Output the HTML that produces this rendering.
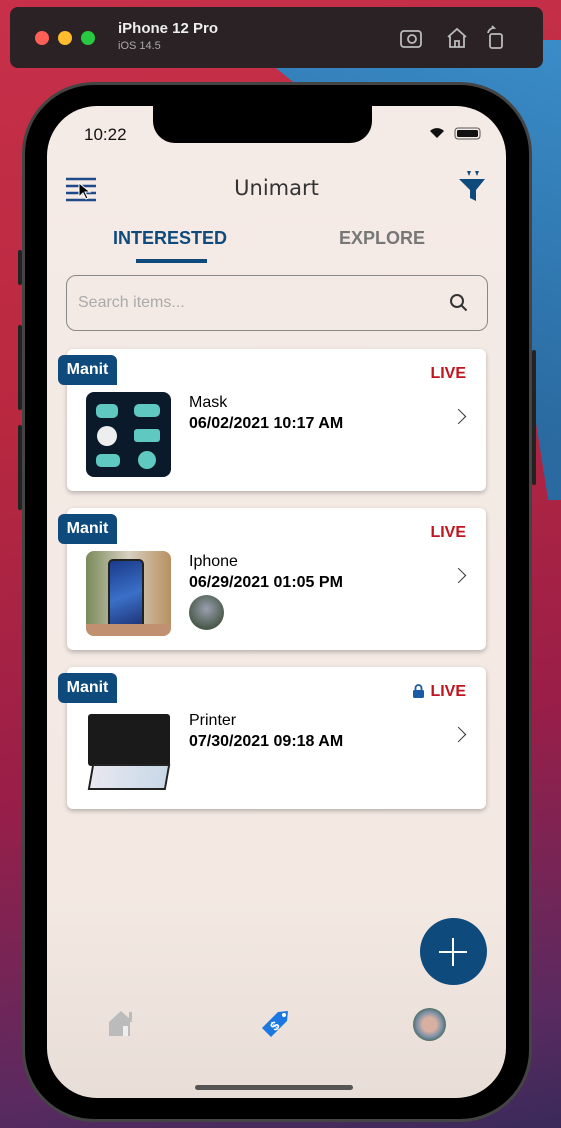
<!DOCTYPE html>
<html><head><meta charset="utf-8"><style>
*{margin:0;padding:0;box-sizing:border-box}
body{width:561px;height:1128px;overflow:hidden;position:relative;font-family:"Liberation Sans",sans-serif;
background:linear-gradient(170deg,#c8304a 0%,#b8283f 35%,#9a1e48 65%,#5a2a60 90%,#3a2a5a 100%)}
.bgblue{position:absolute;right:0;top:40px;width:320px;height:460px;background:linear-gradient(200deg,#3a8cc8,#2a6aa0 70%);clip-path:polygon(0 0,100% 0,100% 100%,96% 100%,80% 30%,25% 14%)}
.bar{position:absolute;left:10px;top:7px;width:533px;height:61px;background:#2a2224;border-radius:8px}
.dot{position:absolute;top:24px;width:14px;height:14px;border-radius:50%}
.phone{position:absolute;left:22px;top:82px;width:510px;height:1040px;background:#000;border-radius:72px;border:3px solid #444}
.btn{position:absolute;width:4px;background:#222;border-radius:2px}
.screen{position:absolute;left:47px;top:106px;width:459px;height:992px;border-radius:50px;background:linear-gradient(#f5ebe6 0%,#f3e8e2 80%,#e8ddd7 100%);overflow:hidden}
.notch{position:absolute;left:106px;top:0;width:219px;height:37px;background:#000;border-radius:0 0 22px 22px}
.card{position:absolute;left:20px;width:419px;height:142px;background:#fff;border-radius:6px;box-shadow:0 2px 5px rgba(0,0,0,.25)}
.tag{position:absolute;left:-9px;top:6px;width:59px;height:30px;background:#0e4a7c;color:#fff;font-weight:bold;font-size:16px;line-height:30px;text-align:center;border-radius:6px 6px 0 6px}
.live{position:absolute;right:20px;top:16px;color:#c0151f;font-weight:bold;font-size:16px}
.img{position:absolute;left:19px;top:43px;width:85px;height:85px;border-radius:8px;overflow:hidden}
.t{position:absolute;left:122px;top:43px;font-size:16px;color:#000;line-height:21px}
.t b{font-weight:bold}
.chev{position:absolute;right:22px;top:62px;width:11px;height:11px;border-right:1.5px solid #333;border-top:1.5px solid #333;transform:rotate(45deg)}
</style></head><body>
<div class="bgblue"></div>
<div class="bar">
<div class="dot" style="left:25px;background:#fe5f57"></div>
<div class="dot" style="left:48px;background:#febc2e"></div>
<div class="dot" style="left:71px;background:#28c840"></div>
<div style="position:absolute;left:108px;top:13px;color:#eee;font-weight:bold;font-size:15px">iPhone 12 Pro</div>
<div style="position:absolute;left:108px;top:33px;color:#aaa;font-size:11px">iOS 14.5</div>
<svg style="position:absolute;left:388px;top:18px" width="120" height="26" fill="none" stroke="#bbb" stroke-width="1.8"><rect x="3" y="6" width="20" height="16" rx="3"/><circle cx="14" cy="14" r="4"/><path d="M50 12l9-8 9 8M52 11v11h14V11M57 22v-6h4v6"/><rect x="92" y="9" width="12" height="14" rx="2"/><path d="M90 8a6 6 0 0 1 6-5l-2-2"/></svg>
</div>
<div class="btn" style="left:18px;top:250px;height:35px"></div>
<div class="btn" style="left:18px;top:325px;height:85px"></div>
<div class="btn" style="left:18px;top:425px;height:85px"></div>
<div class="btn" style="left:532px;top:350px;height:135px"></div>
<div class="phone"></div>
<div class="screen">
<div class="notch"></div>
<div style="position:absolute;left:37px;top:19px;font-size:17px;color:#111">10:22</div>
<svg style="position:absolute;left:380px;top:20px" width="62" height="14"><path d="M10 12l-7-7a10 10 0 0 1 14 0z" fill="#111"/><rect x="28" y="2" width="25" height="11" rx="3" fill="none" stroke="#555"/><rect x="30" y="4" width="21" height="7" rx="1.5" fill="#111"/></svg>
<svg style="position:absolute;left:18px;top:70px" width="36" height="26" stroke="#1e4a8a" stroke-width="2.5"><path d="M1 3h30M1 10h30M1 17h30M1 24h30"/><path d="M14 7l0 14 4-4 3 6 2-1-3-6 5 0z" fill="#000" stroke="#fff" stroke-width="1"/></svg>
<div style="position:absolute;left:0;width:459px;top:70px;text-align:center;font-size:21px;color:#333;font-family:'DejaVu Sans',sans-serif">Unimart</div>
<svg style="position:absolute;left:410px;top:63px" width="30" height="34" fill="#0e4a7c"><path d="M2 10h26l-9 11v11l-6-3v-8z"/><path d="M10 2l2 5 2-5zM18 2l2 5 2-5z"/></svg>
<div style="position:absolute;left:66px;top:122px;font-size:18px;font-weight:bold;color:#0e4a7c">INTERESTED</div>
<div style="position:absolute;left:89px;top:153px;width:71px;height:4px;background:#0e4a7c"></div>
<div style="position:absolute;left:292px;top:122px;font-size:18px;font-weight:bold;color:#777">EXPLORE</div>
<div style="position:absolute;left:19px;top:169px;width:422px;height:56px;border:1.5px solid #888;border-radius:10px"></div>
<div style="position:absolute;left:31px;top:188px;font-size:16px;color:#aaa">Search items...</div>
<svg style="position:absolute;left:402px;top:187px" width="20" height="20" fill="none" stroke="#333" stroke-width="2"><circle cx="8" cy="8" r="6"/><path d="M12.5 12.5l5 5"/></svg>

<div class="card" style="top:243px"><div class="tag">Manit</div><div class="live">LIVE</div>
<div class="img" style="background:#0b1a2a"><svg width="85" height="85"><g fill="#5fc8c0"><rect x="10" y="12" width="22" height="14" rx="5"/><rect x="48" y="12" width="26" height="13" rx="5"/><circle cx="21" cy="44" r="10" fill="#eee"/><rect x="48" y="37" width="26" height="13" rx="3"/><rect x="10" y="62" width="24" height="13" rx="5"/><circle cx="61" cy="68" r="9"/></g></svg></div>
<div class="t">Mask<br><b>06/02/2021 10:17 AM</b></div><div class="chev"></div></div>

<div class="card" style="top:402px"><div class="tag">Manit</div><div class="live">LIVE</div>
<div class="img" style="background:linear-gradient(90deg,#7a8a5a,#d8d0c0 50%,#b89060)"><div style="position:absolute;left:22px;top:8px;width:36px;height:74px;background:linear-gradient(160deg,#1a3a8a,#3a70c8,#1a2a6a);border-radius:5px;border:2px solid #222"></div><div style="position:absolute;left:0;bottom:0;width:85px;height:12px;background:#c09070"></div></div>
<div class="t">Iphone<br><b>06/29/2021 01:05 PM</b></div>
<div style="position:absolute;left:122px;top:87px;width:35px;height:35px;border-radius:50%;background:radial-gradient(circle at 50% 40%,#9aa0b0,#4a5a4a 70%)"></div>
<div class="chev"></div></div>

<div class="card" style="top:561px"><div class="tag">Manit</div>
<svg style="position:absolute;right:62px;top:17px" width="11" height="14" fill="#1a5aa8"><rect x="0" y="6" width="11" height="8" rx="1.5"/><path d="M2.5 6V4a3 3 0 0 1 6 0v2" fill="none" stroke="#1a5aa8" stroke-width="1.8"/></svg>
<div class="live">LIVE</div>
<div class="img" style="background:#fff"><div style="position:absolute;left:2px;top:4px;width:82px;height:52px;background:#1a1a1a;border-radius:3px"></div><div style="position:absolute;left:4px;top:54px;width:78px;height:26px;background:linear-gradient(90deg,#e8e8f0,#c8d8e8);transform:skewX(-10deg);border:2px solid #222"></div></div>
<div class="t">Printer<br><b>07/30/2021 09:18 AM</b></div><div class="chev"></div></div>

<div style="position:absolute;left:373px;top:812px;width:67px;height:67px;border-radius:50%;background:#0e4a7c"></div>
<div style="position:absolute;left:392px;top:845px;width:28px;height:2px;background:#fff"></div>
<div style="position:absolute;left:405px;top:832px;width:2px;height:28px;background:#fff"></div>
<svg style="position:absolute;left:60px;top:902px" width="30" height="30" fill="#bbb"><path d="M2 14L14 3l12 11h-3v14H2z"/><rect x="22" y="4" width="3" height="8"/><rect x="16" y="18" width="5" height="10" fill="#eee"/></svg>
<svg style="position:absolute;left:212px;top:900px" width="34" height="34"><path d="M3 22L19 6l10-1-1 10-16 16z" fill="#1a78e0"/><circle cx="25" cy="9" r="2" fill="#fff"/><text x="12" y="25" font-size="13" font-weight="bold" fill="#fff" transform="rotate(-45 15 20)" font-family="Liberation Sans">$</text></svg>
<div style="position:absolute;left:366px;top:902px;width:33px;height:33px;border-radius:50%;background:radial-gradient(circle at 50% 50%,#d8b0a0 30%,#7a90a8 55%,#3a5a3a 80%)"></div>
<div style="position:absolute;left:148px;top:979px;width:158px;height:5px;border-radius:3px;background:#555"></div>
</div>
</body></html>
